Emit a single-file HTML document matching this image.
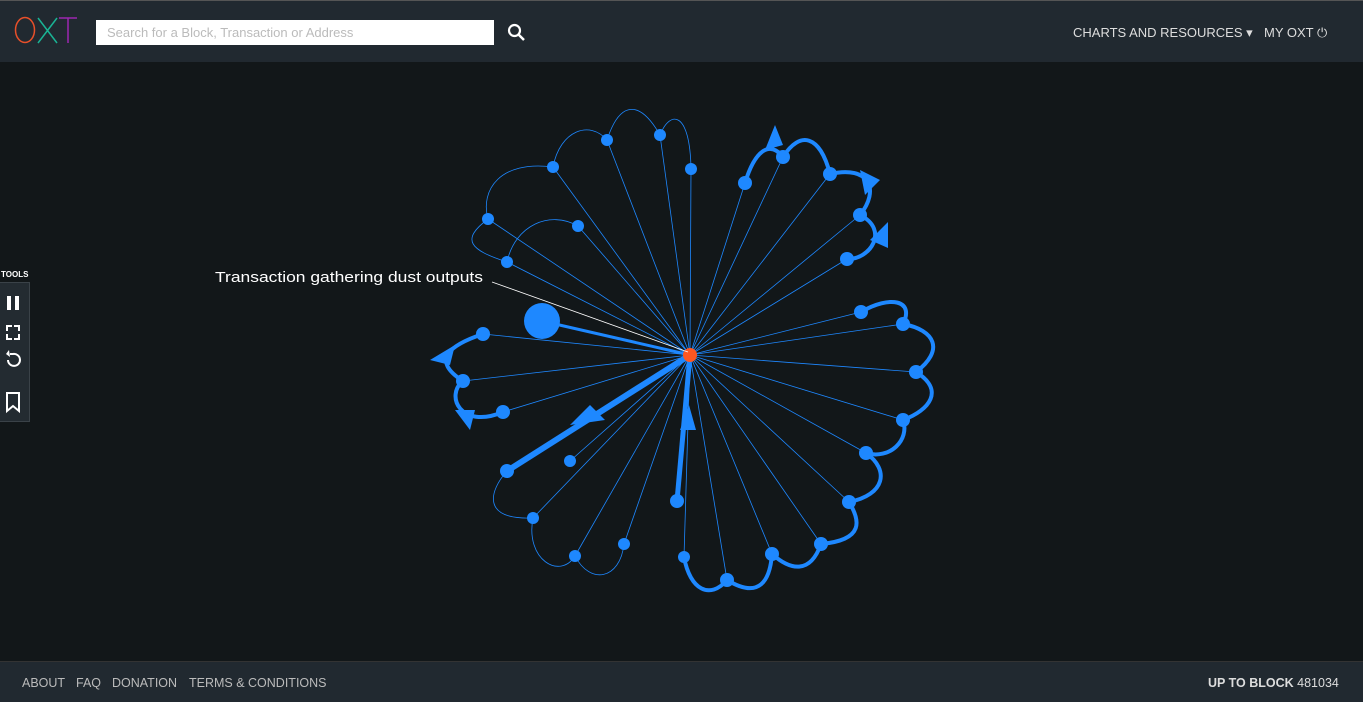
<!DOCTYPE html>
<html><head><style>
body{margin:0;width:1363px;height:701px;background:#121719;font-family:"Liberation Sans",sans-serif;overflow:hidden;position:relative}
.top{position:absolute;left:0;top:0;width:1363px;height:61px;background:#212930;border-top:1px solid #555}
.search{position:absolute;left:96px;top:19px;width:398px;height:25px;background:#fff;color:#bbb;font-size:13px;line-height:26px;padding-left:11px;box-sizing:border-box}
.nav{position:absolute;top:24px;color:#ddd;font-size:13px}
.foot{position:absolute;left:0;top:661px;width:1363px;height:40px;background:#212930;border-top:1px solid #333;color:#bbb;font-size:12.5px}
.foot span{position:absolute;top:14px}
.tools{position:absolute;left:0;top:282px;width:29px;height:138px;background:#232b31;border:1px solid #3a4248;border-left:none}
</style></head><body>
<div class="top">
<svg style="position:absolute;left:14px;top:15px" width="66" height="32"><g fill="none" stroke-width="1.5"><ellipse cx="11" cy="14" rx="9.5" ry="12.5" stroke="#e8502a"/><path d="M24 2L43 27M43 2L24 27" stroke="#1ab394"/><path d="M45 2H63M54 2V27" stroke="#9c27b0"/></g></svg>
<div class="search">Search for a Block, Transaction or Address</div>
<svg style="position:absolute;left:507px;top:22px" width="20" height="20" viewBox="0 0 20 20"><circle cx="7.5" cy="7.5" r="5.5" stroke="#fff" stroke-width="2.2" fill="none"/><path d="M11.5 11.5L17 17" stroke="#fff" stroke-width="2.5"/></svg>
<div class="nav" style="left:1073px">CHARTS AND RESOURCES &#9662;</div>
<div class="nav" style="left:1264px">MY OXT &#x23FB;</div>
</div>
<div style="position:absolute;left:1px;top:270px;color:#fff;font-size:8px;font-weight:bold">TOOLS</div>
<div class="tools">
<svg width="29" height="138"><rect x="7" y="13" width="4" height="14" fill="#fff"/><rect x="15" y="13" width="4" height="14" fill="#fff"/>
<path d="M7 48v-5h5M14 43h5v5M19 51v5h-5M12 56h-5v-5" stroke="#fff" stroke-width="2" fill="none"/>
<path d="M8 77a6 6 0 1 0 5-6h-3" stroke="#fff" stroke-width="2" fill="none"/><path d="M9 67l-3 4 4 3z" fill="#fff"/>
<path d="M7 110v18l6-5 6 5v-18z" stroke="#fff" stroke-width="2" fill="none"/></svg>
</div>
<svg style="position:absolute;left:0;top:0" width="1363" height="701">
<g stroke="#1e88ff" stroke-width="0.8" fill="none">
<path d="M488 219L690 355M553 167L690 355M607 140L690 355M660 135L690 355M691 169L690 355M578 226L690 355M507 262L690 355M745 183L690 355M783 157L690 355M830 174L690 355M860 215L690 355M847 259L690 355M861 312L690 355M903 324L690 355M916 372L690 355M903 420L690 355M866 453L690 355M849 502L690 355M821 544L690 355M772 554L690 355M727 580L690 355M684 557L690 355M483 334L690 355M463 381L690 355M503 412L690 355M533 518L690 355M575 556L690 355M624 544L690 355M570 461L690 355"/>
<path d="M488 219C460 240 470 250 507 262M488 219C480 190 500 160 553 167M553 167C560 130 590 120 607 140M607 140C620 100 640 100 660 135M660 135C670 110 690 110 691 169M507 262C515 225 550 210 578 226"/>
<path d="M507 471C490 490 480 520 533 518C525 560 560 580 575 556C590 585 620 580 624 544"/>
</g>
<g stroke="#1e88ff" stroke-width="4" fill="none">
<path d="M745 183C755 150 770 140 783 157C800 130 820 135 830 174C870 165 880 190 860 215C890 230 870 260 847 259"/>
<path d="M861 312C890 295 915 300 903 324C935 330 945 350 916 372C945 390 930 410 903 420C910 440 890 460 866 453C890 470 885 495 849 502C860 520 865 540 821 544C810 575 790 570 772 554C770 580 760 600 727 580C710 600 690 590 684 557"/>
<path d="M483 334C450 345 430 360 463 381C445 395 460 430 503 412"/>
<path d="M690 355L507 471" stroke-width="6"/><path d="M690 355L677 501" stroke-width="5"/><path d="M690 355L542 321" stroke-width="3"/>
</g>
<g fill="#1e88ff">
<path d="M605 420L570 425L590 405z"/><path d="M689 405L680 430L696 430z"/><path d="M775 125L765 150L783 145z"/><path d="M880 180L860 170L865 195z"/><path d="M888 222L870 240L888 248z"/><path d="M430 360L455 345L450 365z"/><path d="M455 410L470 430L475 410z"/>
<circle cx="488" cy="219" r="6"/><circle cx="553" cy="167" r="6"/><circle cx="607" cy="140" r="6"/><circle cx="660" cy="135" r="6"/><circle cx="691" cy="169" r="6"/><circle cx="578" cy="226" r="6"/><circle cx="507" cy="262" r="6"/>
<circle cx="745" cy="183" r="7"/><circle cx="783" cy="157" r="7"/><circle cx="830" cy="174" r="7"/><circle cx="860" cy="215" r="7"/><circle cx="847" cy="259" r="7"/>
<circle cx="861" cy="312" r="7"/><circle cx="903" cy="324" r="7"/><circle cx="916" cy="372" r="7"/><circle cx="903" cy="420" r="7"/><circle cx="866" cy="453" r="7"/><circle cx="849" cy="502" r="7"/><circle cx="821" cy="544" r="7"/><circle cx="772" cy="554" r="7"/><circle cx="727" cy="580" r="7"/><circle cx="684" cy="557" r="6"/>
<circle cx="483" cy="334" r="7"/><circle cx="463" cy="381" r="7"/><circle cx="503" cy="412" r="7"/><circle cx="507" cy="471" r="7"/><circle cx="533" cy="518" r="6"/><circle cx="575" cy="556" r="6"/><circle cx="624" cy="544" r="6"/><circle cx="570" cy="461" r="6"/><circle cx="677" cy="501" r="7"/>
<circle cx="542" cy="321" r="18"/>
</g>
<circle cx="690" cy="355" r="7" fill="#ff5722"/>
<path d="M492 282L688 352" stroke="#fff" stroke-width="0.8"/>
<text x="215" y="282" fill="#fff" font-size="15" textLength="268" lengthAdjust="spacingAndGlyphs" font-family="Liberation Sans,sans-serif">Transaction gathering dust outputs</text>
</svg>
<div class="foot"><span style="left:22px">ABOUT</span><span style="left:76px">FAQ</span><span style="left:112px">DONATION</span><span style="left:189px">TERMS &amp; CONDITIONS</span><span style="left:1208px;color:#ddd"><b>UP TO BLOCK</b> 481034</span></div>
</body></html>
